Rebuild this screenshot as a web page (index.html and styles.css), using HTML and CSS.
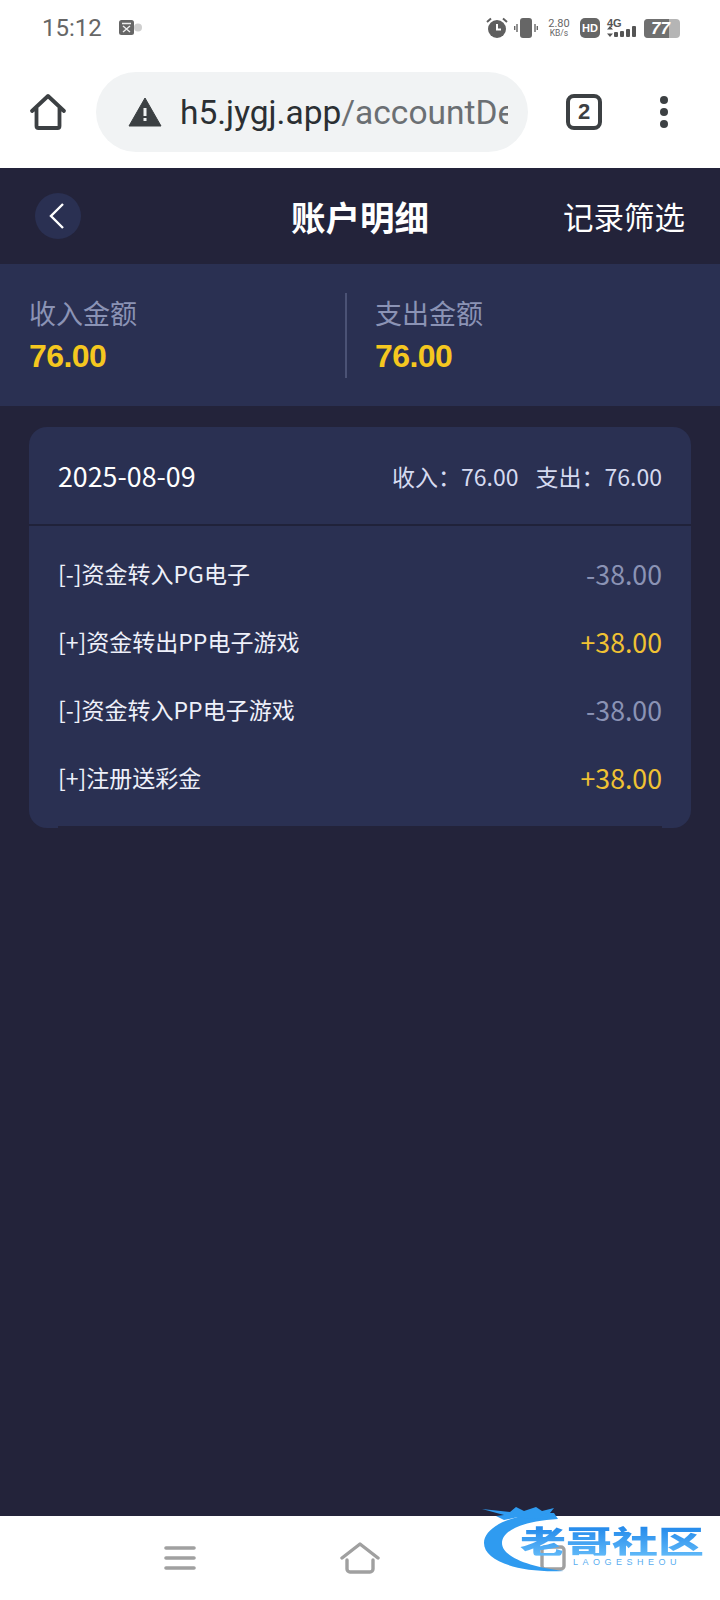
FILE: index.html
```html
<!DOCTYPE html>
<html lang="zh-CN">
<head>
    <meta charset="UTF-8">
    <meta name="viewport" content="width=device-width, initial-scale=1.0">
    <title>账户明细</title>
    <link rel="stylesheet" href="styles.css">
</head>
<body>
    <div class="status-bar">
        <div class="status-left">
            <span class="clock">15:12</span>
            <svg class="app-icon" width="28" height="18" viewBox="0 0 28 18">
                <circle cx="20" cy="8.500" r="4" fill="#cfcfcf"/>
                <rect x="1" y="1" width="15" height="15" rx="2.500" fill="#666"/>
                <path d="M4 4.500h9M5 7l7 6M12 7l-7 6" stroke="#eee" stroke-width="1.400" fill="none"/>
            </svg>
        </div>
        <div class="status-right">
            <svg class="status-alarm" width="22" height="22" viewBox="0 0 22 22">
                <circle cx="11" cy="12" r="9" fill="#5f5f5f"/>
                <path d="M11 7v5.500h4" stroke="#fff" stroke-width="2" fill="none"/>
                <path d="M1 5l4-3.500M21 5l-4-3.500" stroke="#5f5f5f" stroke-width="2" fill="none"/>
            </svg>
            <svg class="status-vibrate" width="24" height="20" viewBox="0 0 24 20">
                <rect x="6" y="0" width="12" height="20" rx="3" fill="#666"/>
                <path d="M3 6v8M21 6v8M0.700 8v4M23.300 8v4" stroke="#666" stroke-width="1.400"/>
            </svg>
            <div class="speed"><span>2.80</span><span class="speed-unit">KB/s</span></div>
            <span class="hd">HD</span>
            <div class="signal">
                <span class="net">4G</span>
                <svg width="30" height="12" viewBox="0 0 30 12">
                    <path d="M3 0l3 3.500H0zM3 11l3-3.500H0z" fill="#555"/>
                    <rect x="7" y="6" width="4" height="5" rx="1" fill="#555"/>
                    <rect x="13" y="5" width="4" height="6" rx="1" fill="#555"/>
                    <rect x="19" y="3" width="4" height="8" rx="1" fill="#555"/>
                    <rect x="25" y="0" width="4" height="11" rx="1" fill="#555"/>
                </svg>
            </div>
            <div class="battery"><span class="battery-level">77</span></div>
        </div>
    </div>

    <div class="toolbar">
        <svg class="home-icon" width="38" height="38" viewBox="0 0 38 38">
            <path d="M3 18L19 3l16 15M7.500 15v18a2 2 0 0 0 2 2h19a2 2 0 0 0 2-2V15" stroke="#3c4043" stroke-width="3.800" stroke-linecap="round" stroke-linejoin="round" fill="none"/>
        </svg>
        <div class="address">
            <svg width="34" height="30" viewBox="0 0 34 30">
                <path d="M17 1L33 29H1z" fill="#3c4043" stroke="#3c4043" stroke-linejoin="round"/>
                <rect x="15.500" y="11" width="3" height="8" fill="#f1f3f4"/>
                <rect x="15.500" y="21" width="3" height="3" fill="#f1f3f4"/>
            </svg>
            <div class="url"><span class="url-host">h5.jygj.app</span>/accountDetail</div>
        </div>
        <div class="tabs">2</div>
        <div class="menu-dots">
            <span class="dot"></span>
            <span class="dot"></span>
            <span class="dot"></span>
        </div>
    </div>

    <div class="page">
        <div class="nav">
            <div class="back">
                <svg width="18" height="28" viewBox="0 0 18 28">
                    <path d="M15 2L3 14l12 12" stroke="#fff" stroke-width="2.400" fill="none"/>
                </svg>
            </div>
            <div class="nav-title">账户明细</div>
            <div class="nav-filter">记录筛选</div>
        </div>

        <div class="summary">
            <div class="summary-item">
                <div class="summary-label">收入金额</div>
                <div class="summary-value">76.00</div>
            </div>
            <div class="summary-item summary-item-right">
                <div class="summary-label">支出金额</div>
                <div class="summary-value">76.00</div>
            </div>
        </div>

        <div class="card">
            <div class="card-head">
                <div class="card-date">2025-08-09</div>
                <div class="card-totals">
                    <span>收入：76.00</span>
                    <span>支出：76.00</span>
                </div>
            </div>
            <div class="rows">
                <div class="row">
                    <span class="row-name">[-]资金转入PG电子</span>
                    <span class="row-out">-38.00</span>
                </div>
                <div class="row">
                    <span class="row-name">[+]资金转出PP电子游戏</span>
                    <span class="row-in">+38.00</span>
                </div>
                <div class="row">
                    <span class="row-name">[-]资金转入PP电子游戏</span>
                    <span class="row-out">-38.00</span>
                </div>
                <div class="row">
                    <span class="row-name">[+]注册送彩金</span>
                    <span class="row-in">+38.00</span>
                </div>
            </div>
        </div>
    </div>

    <div class="bottom-nav">
        <div class="bottom-item">
            <svg width="32" height="26" viewBox="0 0 32 26">
                <path d="M2 3h28M2 13h28M2 23h28" stroke="#a0a0a0" stroke-width="3.600" stroke-linecap="round"/>
            </svg>
        </div>
        <div class="bottom-item">
            <svg width="40" height="32" viewBox="0 0 40 32">
                <path d="M2 16L20 2l18 14M7 18v9a3 3 0 0 0 3 3h20a3 3 0 0 0 3-3v-9" stroke="#a0a0a0" stroke-width="3.400" stroke-linecap="round" stroke-linejoin="round" fill="none"/>
            </svg>
        </div>
        <div class="bottom-item bottom-item-last">
            <svg width="28" height="26" viewBox="0 0 28 26">
                <rect x="3" y="2" width="22" height="22" rx="3" stroke="#a0a0a0" stroke-width="3.400" fill="none"/>
            </svg>
        </div>
    </div>

    <div class="watermark">
        <svg class="watermark-swoosh" width="120" height="70" viewBox="0 0 120 70">
            <path d="M72 8C30 8 2 22 2 38c0 18 34 30 80 28C48 62 20 52 20 38 20 26 40 16 76 14z" fill="#2f9bf0"/>
            <path d="M0 4l28 3 6-5 8 4 12-4 6 4 12-3-4 5-10 2 8 3-18 1-12-2-14 3-8-4 8-1z" fill="#2f9bf0"/>
        </svg>
        <div class="watermark-name">老哥社区</div>
        <div class="watermark-sub">LAOGESHEOU</div>
    </div>
</body>
</html>
```

FILE: styles.css
```css
:root {
    --page-bg: #23233a;
    --panel-bg: #2a3052;
    --muted: #8b93b5;
    --gold: #f0c233;
    --chrome-dark: #3c4043;
}

* {
    box-sizing: border-box;
}

html, body {
    margin: 0;
    height: 100%;
}

body {
    display: flex;
    flex-direction: column;
    position: relative;
    height: 1600px;
    overflow: hidden;
    background-color: #fff;
    font-family: "Noto Sans CJK SC", "Noto Sans", sans-serif;
}

.status-bar {
    display: flex;
    justify-content: space-between;
    align-items: center;
    height: 56px;
    padding: 0 40px 0 42px;
    color: #666;
}

.status-left, .status-right {
    display: flex;
    align-items: center;
}

.status-left {
    gap: 16px;
}

.clock {
    font-family: Roboto, sans-serif;
    font-size: 24px;
}

.status-vibrate {
    margin-left: 6px;
}

.speed {
    display: flex;
    flex-direction: column;
    align-items: center;
    width: 26px;
    margin-left: 8px;
    font-family: Roboto, sans-serif;
    font-size: 11px;
    line-height: 10px;
}

.speed-unit {
    font-size: 8.500px;
    line-height: 9px;
}

.hd {
    width: 20px;
    height: 20px;
    margin-left: 8px;
    border-radius: 5px;
    background-color: #666;
    color: #fff;
    font-family: "Liberation Sans", sans-serif;
    font-size: 11px;
    font-weight: 700;
    line-height: 20px;
    text-align: center;
}

.signal {
    display: flex;
    flex-direction: column;
    width: 31px;
    margin-left: 7px;
}

.net {
    margin-bottom: -3px;
    color: #555;
    font-family: "Liberation Sans", sans-serif;
    font-size: 11px;
    font-weight: 700;
    line-height: 11px;
}

.battery {
    width: 36px;
    height: 19px;
    margin-left: 6px;
    border-radius: 4px;
    background-color: #b5b5b5;
    overflow: hidden;
}

.battery-level {
    display: block;
    width: 25px;
    height: 19px;
    padding-left: 7px;
    background-color: #707070;
    color: #fff;
    font-family: "Liberation Sans", sans-serif;
    font-size: 17px;
    font-style: italic;
    font-weight: 700;
    line-height: 19px;
}

.toolbar {
    display: flex;
    align-items: center;
    height: 112px;
    padding-left: 29px;
}

.home-icon {
    flex: none;
}

.address {
    display: flex;
    align-items: center;
    gap: 18px;
    flex: none;
    width: 432px;
    height: 80px;
    margin-left: 29px;
    padding: 0 20px 0 32px;
    border-radius: 40px;
    background-color: #f1f3f4;
    overflow: hidden;
}

.address svg {
    flex: none;
}

.url {
    overflow: hidden;
    color: #6b6f73;
    font-family: Roboto, sans-serif;
    font-size: 33.500px;
    white-space: nowrap;
}

.url-host {
    color: #2b2f33;
}

.tabs {
    flex: none;
    width: 36px;
    height: 36px;
    margin-left: 38px;
    border: 4px solid var(--chrome-dark);
    border-radius: 8px;
    color: var(--chrome-dark);
    font-family: "Liberation Sans", sans-serif;
    font-size: 22px;
    font-weight: 700;
    line-height: 28px;
    text-align: center;
}

.menu-dots {
    display: flex;
    flex-direction: column;
    gap: 4px;
    margin-left: 58px;
}

.dot {
    width: 8px;
    height: 8px;
    border-radius: 50%;
    background-color: var(--chrome-dark);
}

.page {
    flex: 1;
    background-color: var(--page-bg);
}

.nav {
    display: flex;
    justify-content: space-between;
    align-items: center;
    position: relative;
    height: 96px;
    padding: 0 35px;
    color: #fff;
}

.back {
    display: flex;
    justify-content: center;
    align-items: center;
    width: 46px;
    height: 46px;
    padding-right: 3px;
    border-radius: 50%;
    background-color: var(--panel-bg);
}

.nav-title {
    position: absolute;
    left: 0;
    right: 0;
    text-align: center;
    font-size: 34.500px;
    font-weight: 700;
    line-height: 46px;
}

.nav-filter {
    font-size: 30.500px;
    line-height: 42px;
}

.summary {
    display: flex;
    align-items: center;
    height: 142px;
    background-color: var(--panel-bg);
}

.summary-item {
    width: 345px;
    padding-left: 29px;
}

.summary-item-right {
    width: 375px;
    height: 85px;
    padding-left: 28px;
    border-left: 2px solid #4b5275;
}

.summary-label {
    margin-bottom: 2px;
    color: var(--muted);
    font-size: 27px;
    line-height: 40px;
}

.summary-value {
    color: #f5c71f;
    font-family: "Liberation Sans", sans-serif;
    font-size: 32px;
    font-weight: 700;
    line-height: 43px;
    letter-spacing: -0.6px;
}

.card {
    margin: 21px 29px 0;
    border-radius: 18px;
    background-color: var(--panel-bg);
}

.card-head {
    display: flex;
    justify-content: space-between;
    align-items: center;
    height: 99px;
    padding: 0 29px;
    border-bottom: 2px solid #20223a;
}

.card-date {
    color: #fff;
    font-size: 26.800px;
}

.card-totals {
    display: flex;
    gap: 17px;
    color: #d5daf0;
    font-size: 23px;
}

.rows {
    margin: 0 29px;
    padding: 13px 0 15px;
    border-bottom: 2px solid var(--page-bg);
}

.row {
    display: flex;
    justify-content: space-between;
    align-items: center;
    height: 68px;
}

.row-name {
    color: #eef0fa;
    font-size: 23px;
}

.row-out, .row-in {
    font-size: 26.700px;
}

.row-out {
    color: var(--muted);
}

.row-in {
    color: var(--gold);
}

.bottom-nav {
    display: grid;
    grid-template-columns: repeat(3, 1fr);
    align-items: center;
    flex: none;
    height: 84px;
    padding: 0 90px;
    background-color: #fff;
}

.bottom-item {
    display: flex;
    justify-content: center;
}

.bottom-item-last {
    padding-left: 26px;
}

.watermark {
    position: absolute;
    left: 482px;
    top: 1505px;
    width: 226px;
    height: 70px;
}

.watermark-swoosh {
    position: absolute;
    left: 0;
    top: 0;
}

.watermark-name {
    position: absolute;
    left: 38px;
    top: 12px;
    background: linear-gradient(#1f86ea, #5fb8f8);
    -webkit-background-clip: text;
    background-clip: text;
    color: transparent;
    font-size: 46px;
    font-weight: 900;
    line-height: 46px;
    white-space: nowrap;
    transform: scaleY(0.68);
}

.watermark-sub {
    position: absolute;
    left: 91px;
    top: 52px;
    color: #5aaef0;
    font-family: "Liberation Sans", sans-serif;
    font-size: 9px;
    letter-spacing: 4.500px;
    white-space: nowrap;
}
```
